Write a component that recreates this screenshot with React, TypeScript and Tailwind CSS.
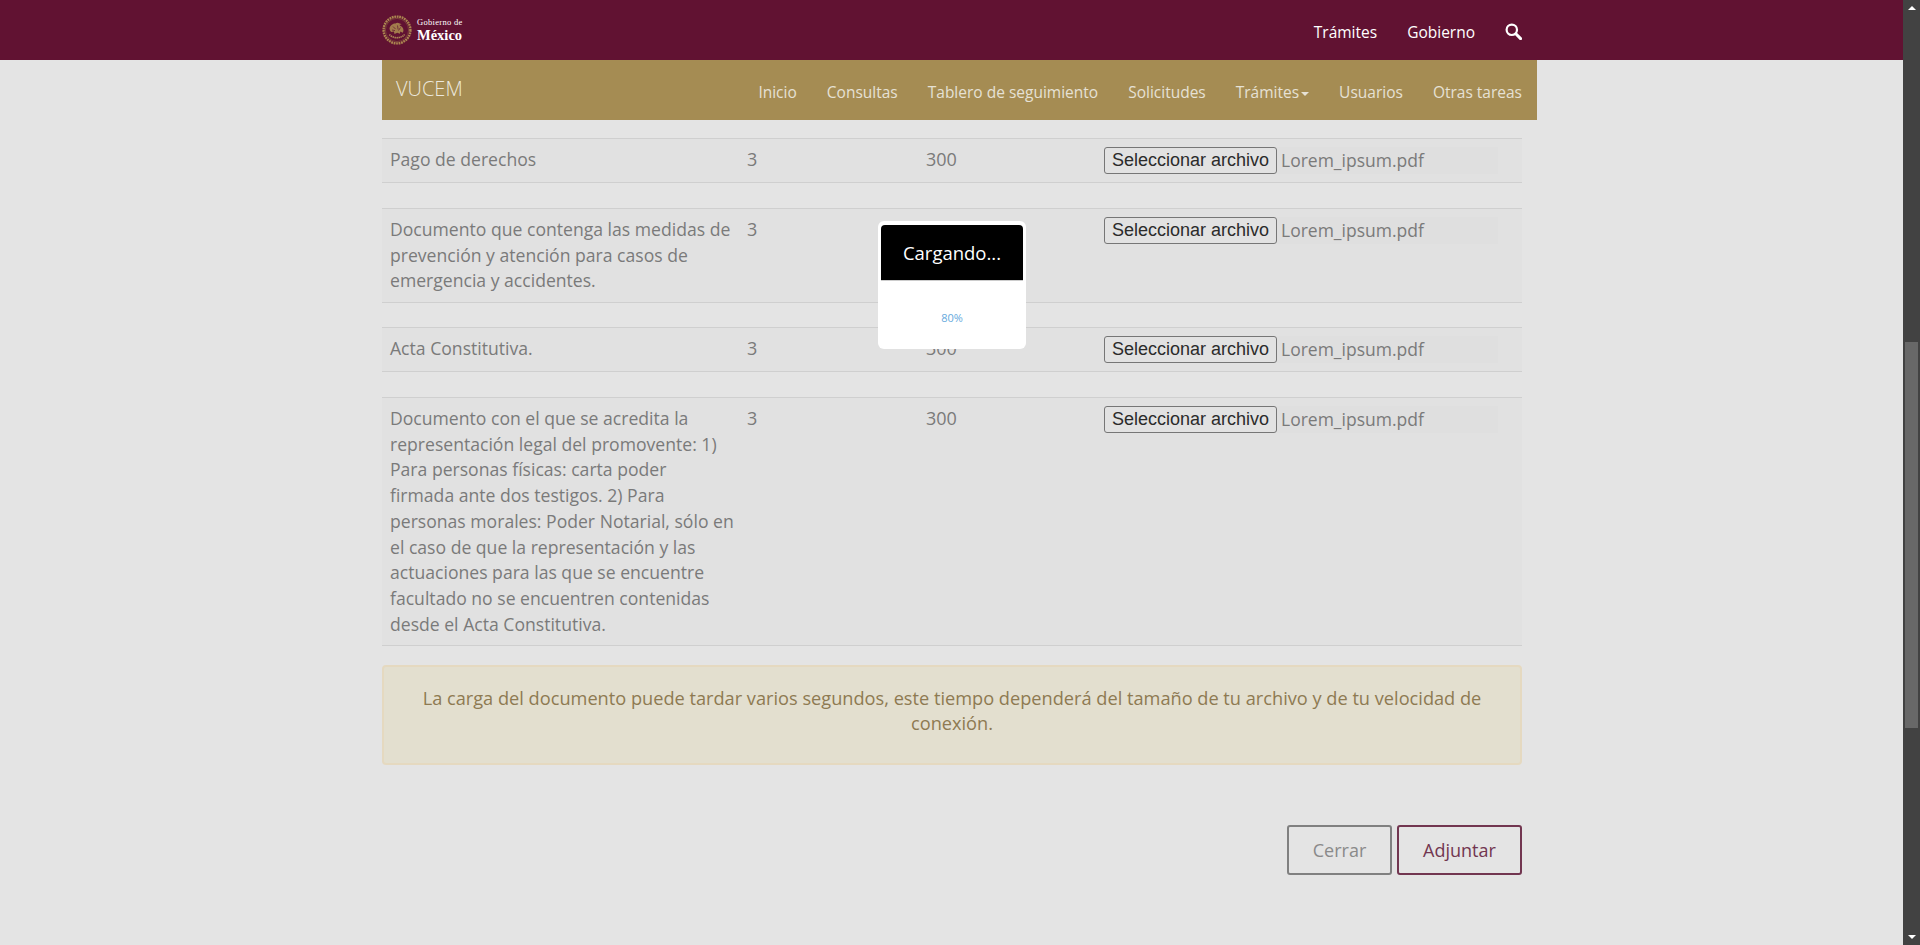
const navItems = ["Inicio", "Consultas", "Tablero de seguimiento", "Solicitudes", "Trámites", "Usuarios", "Otras tareas"];

const docs = [
  { name: "Pago de derechos", box: "h-[45px]" },
  { name: "Documento que contenga las medidas de prevención y atención para casos de emergencia y accidentes.", box: "h-[95px] mt-[25px]" },
  { name: "Acta Constitutiva.", box: "h-[45px] mt-[24px]" },
  {
    name: "Documento con el que se acredita la representación legal del promovente: 1) Para personas físicas: carta poder firmada ante dos testigos. 2) Para personas morales: Poder Notarial, sólo en el caso de que la representación y las actuaciones para las que se encuentre facultado no se encuentren contenidas desde el Acta Constitutiva.",
    box: "h-[249px] mt-[25px]",
  },
];

function Emblem() {
  return (
    <svg width="30" height="30" viewBox="0 0 30 30" fill="none" className="shrink-0">
      <circle cx="15" cy="15" r="13.4" stroke="#ab8650" strokeWidth="2.4" strokeDasharray="1.8 0.7" />
      <circle cx="15" cy="15" r="11.6" stroke="#7f4a3c" strokeWidth="0.8" />
      {/* eagle */}
      <path
        d="M7.5 13.5c.5-3 3.5-5.5 6-5 .8-1 2.8-1.2 3.6-.2l2.6 1-2.2.8c.4 1.2 2.6 1.2 3.6 3.4.6 1.6.4 3.2-.4 4.2l-2.4-1.2-.4 2.2-2.6-1-2.8 1.2-.6-2.4-2.6.6c-1.2-1-1.8-2.6-1.8-4.6z"
        fill="#a27b4c"
      />
      <path d="M11 11.5l2.6 2.6M15.5 10.5l.6 4M18.5 12.5l-2 3M10 15l3 .6" stroke="#6b2a37" strokeWidth="0.9" />
      {/* wreath */}
      <path d="M7.4 19.4c3.4 4.4 11.8 4.4 15.2 0" stroke="#b08d58" strokeWidth="1.6" strokeDasharray="1.4 0.6" />
    </svg>
  );
}

function SearchGlyph() {
  return (
    <svg width="17" height="17" viewBox="0 0 17 17" fill="none" className="ml-[30px] mt-[-3px]">
      <circle cx="6.8" cy="6.8" r="5.2" stroke="white" strokeWidth="2.2" />
      <path d="M10.8 10.8l4.8 4.8" stroke="white" strokeWidth="3" strokeLinecap="round" />
    </svg>
  );
}

function FileInput() {
  return (
    <div className="flex h-[27px] w-[394px] items-center bg-[#dfdfdf]">
      <span className="h-[27px] w-[173px] shrink-0 rounded-[3px] border border-[#767676] bg-[#e2e2e2] text-center font-['Liberation_Sans',sans-serif] text-[18px] leading-[25px] text-[#2b2b2b]">
        Seleccionar archivo
      </span>
      <span className="ml-[4px] text-[17.5px] text-[#7a7a7a]">Lorem_ipsum.pdf</span>
    </div>
  );
}

export default function App() {
  return (
    <div className="relative flex h-[945px] overflow-hidden bg-[#e4e4e4] font-['Open_Sans',sans-serif]">
      <div className="min-w-0 flex-1">
        <header className="flex h-[60px] items-center justify-between bg-[#611232] pl-[382px] pr-[381px]">
          <div className="flex items-center gap-[5px]">
            <Emblem />
            <div className="font-['Liberation_Serif',serif] leading-none text-white">
              <div className="text-[8.5px] tracking-[0.3px]">Gobierno de</div>
              <div className="mt-[1px] text-[14.5px] font-bold">México</div>
            </div>
          </div>
          <div className="mt-[5px] flex items-center text-[15.5px] text-white">
            <span>Trámites</span>
            <span className="ml-[30px]">Gobierno</span>
            <SearchGlyph />
          </div>
        </header>

        <div className="pl-[382px]">
          <nav className="flex h-[60px] w-[1155px] items-center justify-between bg-[#a58c53] pl-[14px] pr-[15px] text-[#e6e1d5]">
            <span className="mt-[-3px] text-[20px] font-light text-[#ece8dd]">VUCEM</span>
            <ul className="mt-[5px] flex gap-[30px] text-[15.5px]">
              {navItems.map((item) => (
                <li key={item} className="flex items-center">
                  {item}
                  {item === "Trámites" && (
                    <span className="ml-[2px] mt-[2px] border-x-[4px] border-t-[4px] border-x-transparent border-t-[#e6e1d5]" />
                  )}
                </li>
              ))}
            </ul>
          </nav>

          <div className="w-[1140px] pt-[18px]">
            {docs.map((doc) => (
              <div key={doc.name} className={`flex ${doc.box} border-y border-[#cfcfcf] bg-[#e1e1e1] text-[18px] leading-[25.7px] text-[#7a7a7a]`}>
                <div className="w-[357px] pl-[8px] pr-[5px] pt-[8px] text-[17.6px]">{doc.name}</div>
                <div className="w-[179px] pl-[8px] pt-[8px]">3</div>
                <div className="w-[178px] pl-[8px] pt-[8px]">300</div>
                <div className="pl-[8px] pt-[8px]">
                  <FileInput />
                </div>
              </div>
            ))}

            <div className="mt-[19px] h-[100px] rounded-[4px] border-2 border-[#e5d9c0] bg-[#e3dfcf] px-[30px] pt-[19px] text-center text-[18.2px] leading-[25px] text-[#8e7a52]">
              La carga del documento puede tardar varios segundos, este tiempo dependerá del tamaño de tu archivo y de tu velocidad de conexión.
            </div>

            <div className="mt-[60px] flex justify-end gap-[5px] text-[18px]">
              <button className="h-[50px] w-[105px] rounded-[3px] border-2 border-[#808080] text-[#8a8a8a]">Cerrar</button>
              <button className="h-[50px] w-[125px] rounded-[3px] border-2 border-[#723650] text-[#723650]">Adjuntar</button>
            </div>
          </div>
        </div>
      </div>

      {/* scrollbar */}
      <div className="flex w-[17px] shrink-0 flex-col items-center bg-[#424242] py-[6px]">
        <span className="border-x-[4px] border-b-[4px] border-x-transparent border-b-white" />
        <div className="mt-[332px] h-[386px] w-[13px] bg-[#686868]" />
        <span className="mt-auto border-x-[4px] border-t-[4px] border-x-transparent border-t-white" />
      </div>

      {/* loading modal */}
      <div className="absolute left-[878px] top-[221px] h-[128px] w-[148px] rounded-[6px] bg-white p-[3px] pt-[4px]">
        <div className="flex h-[56px] items-center justify-center rounded-t-[4px] border-b border-[#ccc] bg-black text-[18.5px] text-white">
          Cargando...
        </div>
        <div className="mt-[29px] text-center text-[11px] text-[#66aadd]">80%</div>
      </div>
    </div>
  );
}
